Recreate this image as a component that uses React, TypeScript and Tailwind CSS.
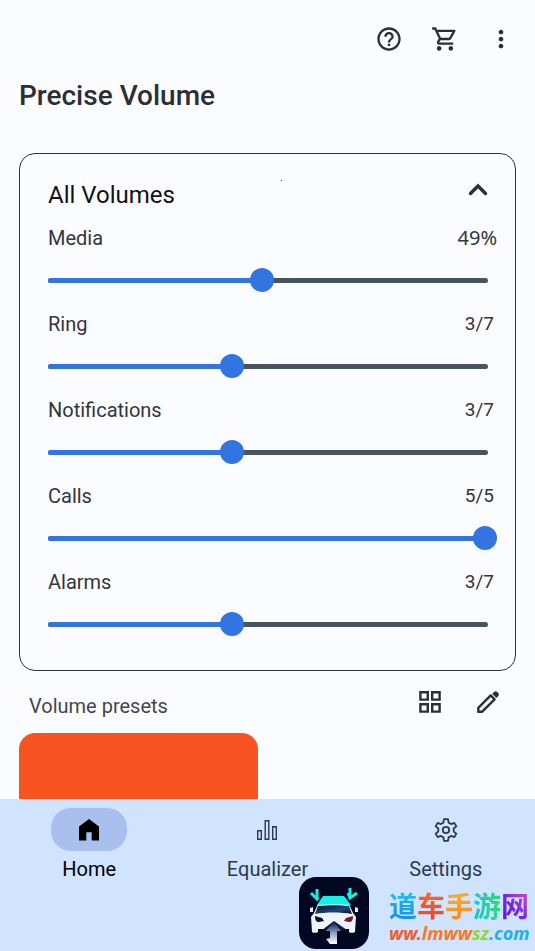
import { useState } from "react";
import { MdHelpOutline, MdMoreVert, MdOutlineShoppingCart } from "react-icons/md";

type Volume = {
  id: string;
  label: string;
  level: number;
  steps?: number;
  step?: number;
};

const initialVolumes: Volume[] = [
  { id: "media", label: "Media", level: 49 },
  { id: "ring", label: "Ring", level: 42, step: 3, steps: 7 },
  { id: "notifications", label: "Notifications", level: 42, step: 3, steps: 7 },
  { id: "calls", label: "Calls", level: 100, step: 5, steps: 5 },
  { id: "alarms", label: "Alarms", level: 42, step: 3, steps: 7 },
];

function ChevronUp({ className }: { className?: string }) {
  return (
    <svg viewBox="0 0 24 24" fill="none" stroke="currentColor" strokeWidth="3.4" className={className}>
      <path d="M4.5 16.5L12 9l7.5 7.5" strokeLinecap="round" />
    </svg>
  );
}

function GridIcon() {
  return (
    <svg viewBox="0 0 24 24" fill="none" stroke="currentColor" strokeWidth="2.4" className="size-6">
      <path d="M2.4 2.2h7.4v7.4H2.4zM14.2 2.2h7.4v7.4h-7.4zM2.4 14.2h7.4v7.4H2.4zM14.2 14.2h7.4v7.4h-7.4z" />
    </svg>
  );
}

function PencilIcon() {
  return (
    <svg viewBox="0 0 24 24" className="size-6">
      <path
        d="M2.3 21.7v-3.9L14.7 5.4l3.9 3.9L6.2 21.7z"
        fill="none"
        stroke="currentColor"
        strokeWidth="2.4"
        strokeLinejoin="round"
      />
      <path
        d="M16.2 3.8l1.9-1.9c.9-.9 2.2-.9 3 0l1.2 1.2c.8.8.8 2.1 0 3l-1.9 1.9z"
        fill="currentColor"
      />
    </svg>
  );
}

function HomeIcon() {
  return (
    <svg viewBox="0 0 24 24" fill="currentColor" className="size-6">
      <path d="M12 1L22 8.6V22.5h-7.3V14.3H9.3v8.2H2V8.6z" />
    </svg>
  );
}

function EqualizerIcon() {
  return (
    <svg viewBox="0 0 24 24" fill="none" stroke="currentColor" strokeWidth="1.4" className="size-6">
      <path d="M2.7 12.7h3.6v8.6H2.7zM10.2 2.7h3.6v18.6h-3.6zM17.7 8.7h3.6v12.6h-3.6z" />
    </svg>
  );
}

function GearIcon() {
  return (
    <svg viewBox="0 0 24 24" fill="none" stroke="currentColor" strokeWidth="1.8" className="size-6">
      <path
        d="M10 1.2H14L14.6 4.6 17.1 6.05 20.35 4.87 22.35 8.33 19.7 10.55V13.45L22.35 15.67 20.35 19.13 17.1 17.95 14.6 19.4 14 22.8H10L9.4 19.4 6.9 17.95 3.65 19.13 1.65 15.67 4.3 13.45V10.55L1.65 8.33 3.65 4.87 6.9 6.05 9.4 4.6z"
        strokeLinejoin="round"
      />
      <circle cx="12" cy="12" r="3.2" />
    </svg>
  );
}

function CarLogo({ className }: { className?: string }) {
  return (
    <svg viewBox="0 0 70 72" className={className}>
      <defs>
        <linearGradient id="glass" x1="0" y1="0" x2="1" y2="1">
          <stop offset="0" stopColor="#07132f" />
          <stop offset="0.6" stopColor="#1d4677" />
          <stop offset="1" stopColor="#07132f" />
        </linearGradient>
        <linearGradient id="arrow" x1="0" y1="0" x2="0" y2="1">
          <stop offset="0" stopColor="#0d1c45" />
          <stop offset="0.5" stopColor="#8e9fc4" />
          <stop offset="1" stopColor="#ffffff" />
        </linearGradient>
      </defs>
      <rect width="70" height="72" rx="17" fill="#020821" />
      <path
        d="M19 27h31l4 9 3 4-1 15c0 1-6 1-6 0v-3H19v3c0 1-6 1-6 0l-1-15 3-4z"
        fill="#eef3fc"
      />
      <path d="M24 19h21l7 9c-11-1-23-1-34 0z" fill="#13f0e6" />
      <path d="M19 29c10-1 22-1 31 0l3 8c-11-2-26-2-37 0z" fill="url(#glass)" />
      <path d="M11 31l3-1v5h-3zM56 30l3 1v4h-3z" fill="#e5edfa" />
      <path d="M16 39l7 2 2 3-5 1c-3 0-4-2-4-6z" fill="#061226" />
      <path d="M54 39l-7 2-2 3 5 1c3 0 4-2 4-6z" fill="#7d1a2e" />
      <path d="M23 53l12-9 13 9z" fill="#101d40" />
      <path d="M35 45l7 9h-4v13h-7l-4-5 4-1v-7h-4z" fill="url(#arrow)" />
      <path
        d="M18 12v10m-6-6l6 6 1-2M51 11v11m-2-6l2 5 7-5"
        fill="none"
        stroke="#13f0e6"
        strokeWidth="3"
      />
    </svg>
  );
}

function VolumeRow({ volume, onChange }: { volume: Volume; onChange: (level: number) => void }) {
  const { id, label, level, step, steps } = volume;
  return (
    <div className="h-[86px]">
      <div className="flex h-7 items-center justify-between pl-7 text-[20px] text-[#33353a]">
        <label htmlFor={id}>{label}</label>
        {steps ? (
          <output htmlFor={id} className="pr-[21px] text-[19px]">
            {step}/{steps}
          </output>
        ) : (
          <output htmlFor={id} className="pr-[18px] font-['Noto_Sans',sans-serif]">
            {level}%
          </output>
        )}
      </div>
      <div className="mt-4 mr-[18px] ml-4 grid items-center">
        <span className="col-start-1 row-start-1 mr-[9px] ml-3 h-[5px] rounded-full bg-[#485460]" />
        <span className="col-start-1 row-start-1 mx-3">
          <span
            className="block h-[5px] rounded-full bg-[#3274e0]"
            style={{ width: `${level}%` }}
          />
        </span>
        <input
          id={id}
          type="range"
          min={0}
          max={100}
          value={level}
          onChange={(e) => onChange(Number(e.target.value))}
          className="col-start-1 row-start-1 h-6 w-full cursor-pointer appearance-none bg-transparent
                     [&::-webkit-slider-thumb]:size-6 [&::-webkit-slider-thumb]:appearance-none
                     [&::-webkit-slider-thumb]:rounded-full [&::-webkit-slider-thumb]:bg-[#3274e0]"
        />
      </div>
    </div>
  );
}

const tabs = [
  { id: "home", label: "Home", icon: <HomeIcon /> },
  { id: "equalizer", label: "Equalizer", icon: <EqualizerIcon /> },
  { id: "settings", label: "Settings", icon: <GearIcon /> },
];

export default function App() {
  const [volumes, setVolumes] = useState(initialVolumes);
  const [open, setOpen] = useState(true);
  const [tab, setTab] = useState("home");

  const handleChange = (id: string, level: number) => {
    setVolumes((prev) =>
      prev.map((v) =>
        v.id === id
          ? { ...v, level, step: v.steps && Math.round((level / 100) * v.steps) }
          : v,
      ),
    );
  };

  return (
    <div className="flex h-screen flex-col bg-[#fbfcff] font-[Roboto,sans-serif] text-[#2c2e33]">
      <main className="min-h-0 flex-1 overflow-y-auto px-[19px] [scrollbar-width:none]">
        <header>
          <div className="flex h-[78px] items-center justify-end gap-7 pr-px">
            <button type="button" aria-label="Help">
              <MdHelpOutline className="size-7" />
            </button>
            <button type="button" aria-label="Shop">
              <MdOutlineShoppingCart className="size-7" />
            </button>
            <button type="button" aria-label="More options">
              <MdMoreVert className="size-7" />
            </button>
          </div>
          <h1 className="h-[75px] text-[28px] leading-9 font-medium">Precise Volume</h1>
        </header>

        <section className="rounded-2xl border border-[#303238] pt-6 pb-4">
          <div className="flex h-[34px] items-center pr-[25px] pl-7">
            <h2 className="text-[24px] text-[#111216]">All Volumes</h2>
            <span className="mt-[2px] ml-[106px] size-px self-start bg-[#303238]" />
            <button
              type="button"
              aria-label="Toggle volumes"
              aria-expanded={open}
              onClick={() => setOpen(!open)}
              className="mb-3 ml-auto"
            >
              <ChevronUp className="size-6" />
            </button>
          </div>
          <div className="pt-3">
            {open &&
              volumes.map((v) => (
                <VolumeRow key={v.id} volume={v} onChange={(level) => handleChange(v.id, level)} />
              ))}
          </div>
        </section>

        <section>
          <div className="flex h-[62px] items-center pr-4 pl-[10px]">
            <h2 className="flex-1 pt-2 text-[20px] text-[#44464b]">Volume presets</h2>
            <button type="button" aria-label="Grid view" className="mr-[34px]">
              <GridIcon />
            </button>
            <button type="button" aria-label="Edit presets">
              <PencilIcon />
            </button>
          </div>
          <div className="grid grid-cols-2 gap-5">
            <button
              type="button"
              aria-label="Volume preset"
              className="h-32 rounded-2xl bg-[#f85320]"
            />
          </div>
        </section>
      </main>

      <nav className="relative grid h-[152px] shrink-0 grid-cols-3 items-start bg-[#d0e3ff] pt-[9px]">
        {tabs.map((t) => (
          <button
            key={t.id}
            type="button"
            onClick={() => setTab(t.id)}
            className={`flex flex-col items-center gap-1 text-[20px] ${
              tab === t.id ? "text-black" : "text-[#2e3a4b]"
            }`}
          >
            <span
              className={`flex h-[43px] w-[76px] items-center justify-center rounded-[20px] ${
                tab === t.id ? "bg-[#a9c0ef]" : ""
              }`}
            >
              {t.icon}
            </span>
            <span className="leading-7">{t.label}</span>
          </button>
        ))}

        <div className="absolute right-[6px] bottom-[2px] flex items-end gap-5">
          <CarLogo className="h-[72px] w-[70px]" />
          <div className="w-[140px] pb-1 font-bold">
            <div className="flex font-['Noto_Sans_CJK_SC',sans-serif] text-[28px] leading-8 text-transparent">
              <span className="bg-linear-to-b from-[#22c5f2] to-[#168de9] bg-clip-text">道</span>
              <span className="bg-linear-to-b from-[#ff6b22] to-[#f23d28] bg-clip-text">车</span>
              <span className="bg-linear-to-b from-[#ffae21] to-[#fa8b1a] bg-clip-text">手</span>
              <span className="bg-linear-to-r from-[#22c3c9] to-[#2bdc71] bg-clip-text">游</span>
              <span className="bg-linear-to-tr from-[#5b18d8] via-[#7b24ef] to-[#f22cae] bg-clip-text">
                网
              </span>
            </div>
            <a
              href="#site"
              className="block font-['Noto_Sans',sans-serif] text-[18px] leading-6 whitespace-nowrap italic"
            >
              <span className="text-[#f05a2c]">ww.</span>
              <span className="text-[#f57a20]">lmww</span>
              <span className="text-[#93d62c]">sz</span>
              <span className="text-[#25aeea]">.com</span>
            </a>
          </div>
        </div>
      </nav>
    </div>
  );
}
